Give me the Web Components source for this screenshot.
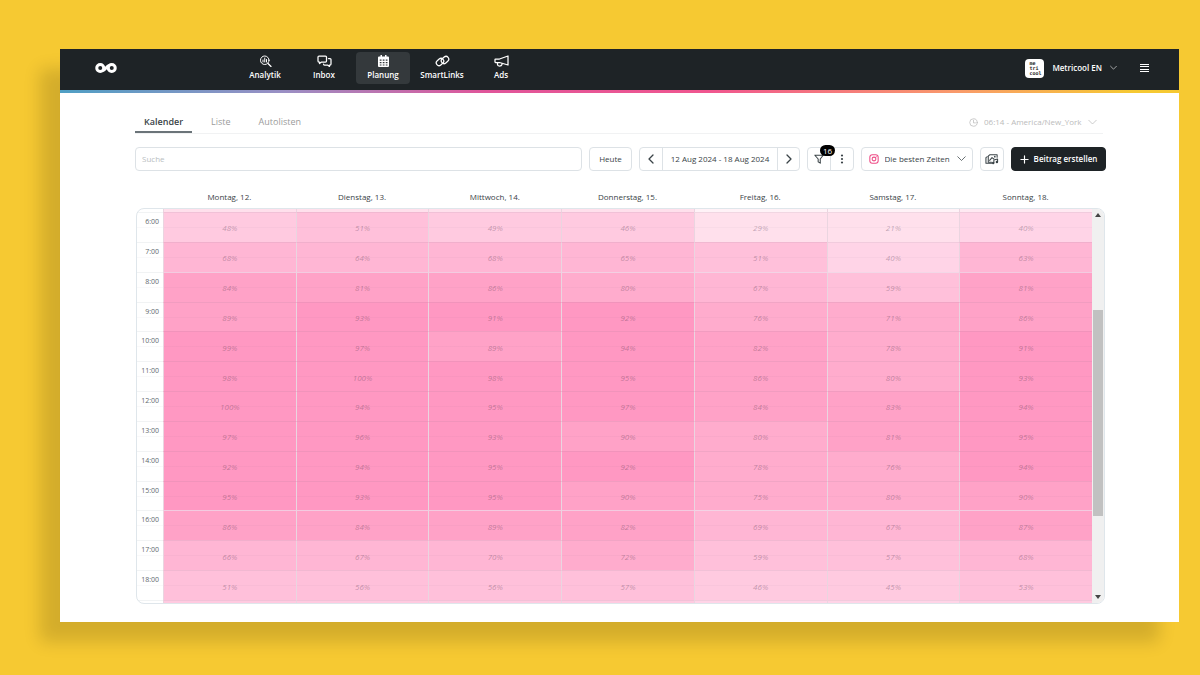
<!DOCTYPE html>
<html lang="de">
<head>
<meta charset="utf-8">
<title>Metricool – Planung</title>
<style>
  body { margin: 0; background: #f6c932; font-family: "Open Sans", "Noto Sans", sans-serif; font-size: 8px; line-height: 12px; color: #3a4347; }
</style>
</head>
<body>
<planner-window>
  <app-header slot="header">
    <nav-item icon="analytics">Analytik</nav-item>
    <nav-item icon="inbox">Inbox</nav-item>
    <nav-item icon="calendar" active>Planung</nav-item>
    <nav-item icon="links">SmartLinks</nav-item>
    <nav-item icon="ads">Ads</nav-item>
  </app-header>
  <view-tabs></view-tabs>
  <plan-toolbar></plan-toolbar>
  <week-calendar></week-calendar>
</planner-window>

<script>
const stroke = 'fill="none" stroke="currentColor" stroke-linecap="round" stroke-linejoin="round"';
const ICONS = {
  logo: ['0 0 44 22', `<g fill="none" stroke="currentColor" stroke-width="6"><circle cx="10.500" cy="11" r="7"/><circle cx="33.500" cy="11" r="7"/><path d="M16 16c4-1 8-9 12-10"/></g>`],
  analytics: ['0 0 24 24', `<g ${stroke} stroke-width="2"><circle cx="10.500" cy="10.500" r="8.500"/><path d="M17 17l6 6" stroke-width="2.500"/><path d="M7 10v4M10.500 6v8M14 9v5"/></g>`],
  inbox: ['0 0 30 24', `<g ${stroke} stroke-width="2.500"><path d="M4 2h13a2 2 0 0 1 2 2v8a2 2 0 0 1-2 2H9l-4 3v-3H4a2 2 0 0 1-2-2V4a2 2 0 0 1 2-2z"/><path d="M23 7h3a2 2 0 0 1 2 2v9a2 2 0 0 1-2 2h-1v3l-4-3h-6a2 2 0 0 1-2-2"/></g>`],
  calendar: ['0 0 22 24', `<path fill="currentColor" fill-rule="evenodd" d="M5 0h3v3h6V0h3v3h3a2 2 0 0 1 2 2v17a2 2 0 0 1-2 2H2a2 2 0 0 1-2-2V5a2 2 0 0 1 2-2h3zM3.500 9v2.500h3.500V9zm6 0v2.500H13V9zm6 0v2.500H19V9zm-12 5v2.500h3.500V14zm6 0v2.500H13V14zm6 0v2.500H19V14zm-12 5v2h3.500v-2zm6 0v2H13v-2zm6 0v2H19v-2z"/>`],
  links: ['0 0 30 24', `<g ${stroke} stroke-width="2.500"><rect x="-8" y="-5.500" width="16" height="11" rx="5.500" transform="translate(10 14) rotate(-40)"/><rect x="-8" y="-5.500" width="16" height="11" rx="5.500" transform="translate(20 10) rotate(-40)"/></g>`],
  ads: ['0 0 30 24', `<g ${stroke} stroke-width="2.500"><path d="M28 2v18L11 15H3a1 1 0 0 1-1-1V9a1 1 0 0 1 1-1h8z"/><path d="M7 15v4q0 3 4 3t5-3v-2"/></g>`],
  down: ['0 0 12 8', `<path ${stroke} d="M1 1l5 5 5-5"/>`],
  left: ['0 0 8 12', `<path ${stroke} stroke-width="1.300" d="M6 2L2 6l4 4"/>`],
  right: ['0 0 8 12', `<path ${stroke} stroke-width="1.300" d="M2 2l4 4-4 4"/>`],
  menu: ['0 0 9 8', `<path fill="currentColor" d="M0 0h9v1H0zM0 2h9v1H0zM0 5h9v1H0zM0 7h9v1H0z"/>`],
  clock: ['0 0 24 24', `<g ${stroke} stroke-width="2"><circle cx="12" cy="12" r="10"/><path d="M12 6v7h5"/></g>`],
  filter: ['0 0 24 24', `<path ${stroke} stroke-width="2.500" d="M2 3h20l-7 9v10l-5-3v-7z"/>`],
  dots: ['0 0 4 12', `<g fill="currentColor"><circle cx="2" cy="2.500" r="1.100"/><circle cx="2" cy="6" r="1.100"/><circle cx="2" cy="9.500" r="1.100"/></g>`],
  instagram: ['0 0 24 24', `<g ${stroke} stroke-width="2.500"><rect x="2" y="2" width="20" height="20" rx="6"/><circle cx="12" cy="12" r="4.500"/><path d="M17.500 6.500h.1"/></g>`],
  media: ['0 0 30 24', `<g ${stroke} stroke-width="2.200"><path d="M26 8V3H10l-3 3v13h7"/><path d="M5 7l-3 2v12h12"/><path d="M10 15l5-6 4 3"/><path d="M19 20v-6l8-2v6"/></g><g fill="currentColor"><circle cx="21" cy="7" r="1.800"/><circle cx="17.500" cy="20.500" r="2.600"/><circle cx="25.500" cy="18.500" r="2.600"/></g>`],
  plus: ['0 0 10 10', `<path ${stroke} stroke-width="1.300" d="M5 1v8M1 5h8"/>`],
  up: ['0 0 6 4', `<path fill="currentColor" d="M0 4l3-4 3 4z"/>`],
  caret: ['0 0 6 4', `<path fill="currentColor" d="M0 0l3 4 3-4z"/>`]
};

class UiIcon extends HTMLElement {
  connectedCallback() {
    if (this.shadowRoot) return;
    const [box, art] = ICONS[this.getAttribute('name')];
    this.attachShadow({ mode: 'open' }).innerHTML = `
      <style>:host{display:inline-flex;flex:none;width:12px;height:12px}svg{width:100%;height:100%}</style>
      <svg viewBox="${box}" aria-hidden="true">${art}</svg>`;
  }
}
customElements.define('ui-icon', UiIcon);

function define(name, markup, setup) {
  const template = document.createElement('template');
  template.innerHTML = `<style>*{box-sizing:border-box}button,input,select{font:inherit;color:inherit;margin:0}</style>` + markup;
  customElements.define(name, class extends HTMLElement {
    connectedCallback() {
      if (this.shadowRoot) return;
      const content = template.content.cloneNode(true);
      if (setup) setup(this, content);
      this.attachShadow({ mode: 'open' }).append(content);
    }
  });
}

define('planner-window', `
  <style>
    :host { display: block; margin: 49px 21px 53px 60px; background: #fff; box-shadow: -20px 20px 16px rgba(0,0,0,.14); }
    main { padding: 18px 73px 18px 75px; }
  </style>
  <slot name="header"></slot>
  <main><slot></slot></main>`);

define('app-header', `
  <style>
    :host { display: block; color: #fff; background: #1e2326; font-weight: 600; }
    header { display: flex; align-items: center; height: 41px; padding: 0 30px 3px 35px; }
    .logo { width: 143px; display: flex; color: #fff; }
    .logo ui-icon { width: 22px; height: 12px; }
    nav { display: flex; gap: 5px; flex: 1; }
    .account, .menu { display: flex; align-items: center; border: 0; padding: 0; background: none; }
    .account { gap: 8px; }
    .account ui-icon { width: 7px; height: 6px; }
    .avatar { display: flex; flex-direction: column; justify-content: center; width: 19px; height: 19px; border-radius: 4px; padding-left: 4px; background: #fff; color: #1e2326; text-align: left; font: 700 5px/5px "DejaVu Sans Mono", monospace; }
    .menu { margin-left: 23px; }
    .menu ui-icon { width: 9px; height: 8px; }
    .rainbow { height: 3px; background: linear-gradient(90deg, #4f9fc4 0%, #9a8fc4 20%, #e0559a 38%, #f0568f 58%, #f99a6b 80%, #f6c932 96%); }
  </style>
  <header>
    <a class="logo" href="#" aria-label="Metricool"><ui-icon name="logo"></ui-icon></a>
    <nav><slot></slot></nav>
    <button class="account"><span class="avatar"><span>me</span><span>tri</span><span>cool</span></span><span>Metricool EN</span><ui-icon name="down"></ui-icon></button>
    <button class="menu" aria-label="Menü"><ui-icon name="menu"></ui-icon></button>
  </header>
  <div class="rainbow"></div>`);

define('nav-item', `
  <style>
    :host { display: block; width: 54px; }
    a { display: flex; flex-direction: column; align-items: center; gap: 2px; height: 32px; padding-top: 3px; border-radius: 4px; color: #fff; text-decoration: none; white-space: nowrap; }
    :host([active]) a { background: #34393c; }
    ui-icon { width: 15px; height: 12px; }
  </style>
  <a href="#"><ui-icon></ui-icon><span><slot></slot></span></a>`,
  (host, root) => root.querySelector('ui-icon').setAttribute('name', host.getAttribute('icon')));

define('view-tabs', `
  <style>
    :host { display: flex; justify-content: space-between; height: 22px; margin-right: 3px; border-bottom: 1px solid #f1f2f3; }
    nav { display: flex; gap: 19px; font-size: 9px; }
    a { height: 22px; line-height: 22px; color: #9b9b9b; text-decoration: none; padding: 0 9px 0 0; }
    a[aria-current] { padding: 0 9px; color: #3a4347; font-weight: 600; border-bottom: 2px solid #6b7479; }
    label { display: flex; align-items: center; gap: 6px; padding-right: 6px; color: #bbb; }
    ui-icon { width: 9px; height: 9px; }
    select { appearance: none; border: 0; padding: 0; background: none; }
  </style>
  <nav><a href="#" aria-current="page">Kalender</a><a href="#">Liste</a><a href="#">Autolisten</a></nav>
  <label><ui-icon name="clock"></ui-icon><select aria-label="Zeitzone"><option>06:14 - America/New_York</option></select><ui-icon name="down"></ui-icon></label>`);

define('plan-toolbar', `
  <style>
    :host { display: flex; gap: 7px; height: 24px; margin-top: 13px; }
    input { flex: 1; min-width: 0; }
    input, .box { border: 1px solid #dde2e6; border-radius: 4px; background: #fff; padding: 0 6px; outline: 0; }
    input::placeholder { color: #b9bec1; }
    .box { display: flex; align-items: center; justify-content: center; flex: none; }
    .group { padding: 0; align-items: stretch; }
    .group > * { display: flex; align-items: center; justify-content: center; width: 22px; border: 0; padding: 0; background: none; }
    .group > * + * { border-left: 1px solid #dde2e6; }
    .group .range { width: 115px; }
    .today { width: 43px; }
    .filters { width: 47px; }
    .filters > * { flex: 1; }
    .filter { position: relative; }
    .badge { position: absolute; left: 12px; top: -3px; width: 15px; border-radius: 6px; color: #fff; background: #000; line-height: 11px; }
    .times { width: 112px; gap: 6px; }
    .times select { appearance: none; border: 0; padding: 0; background: none; }
    .arrow { width: 8px; height: 12px; }
    .instagram { color: #ee4c86; }
    .small { width: 9px; height: 10px; }
    .media { width: 24px; padding: 0; }
    .media ui-icon { width: 14px; }
    .create { width: 95px; gap: 5px; color: #fff; background: #1e2326; border-color: #1e2326; font-weight: 600; }
    .filter ui-icon, .instagram { width: 10px; height: 10px; }
    .create ui-icon { width: 9px; height: 9px; }
  </style>
  <input type="search" placeholder="Suche" aria-label="Suche">
  <button class="box today">Heute</button>
  <div class="box group"><button aria-label="Vorherige Woche"><ui-icon class="arrow" name="left"></ui-icon></button><span class="range">12 Aug 2024 - 18 Aug 2024</span><button aria-label="Nächste Woche"><ui-icon class="arrow" name="right"></ui-icon></button></div>
  <div class="box group filters"><button class="filter" aria-label="Filter"><ui-icon name="filter"></ui-icon><span class="badge">16</span></button><button aria-label="Mehr"><ui-icon name="dots"></ui-icon></button></div>
  <label class="box times"><ui-icon class="instagram" name="instagram"></ui-icon><select aria-label="Zeiten"><option>Die besten Zeiten</option></select><ui-icon class="small" name="down"></ui-icon></label>
  <button class="box media" aria-label="Medien"><ui-icon name="media"></ui-icon></button>
  <button class="box create"><ui-icon name="plus"></ui-icon>Beitrag erstellen</button>`);

const DAYS = ['Montag, 12.', 'Dienstag, 13.', 'Mittwoch, 14.', 'Donnerstag, 15.', 'Freitag, 16.', 'Samstag, 17.', 'Sonntag, 18.'];
const HOURS = {
  6: [48, 51, 49, 46, 29, 21, 40], 7: [68, 64, 68, 65, 51, 40, 63], 8: [84, 81, 86, 80, 67, 59, 81],
  9: [89, 93, 91, 92, 76, 71, 86], 10: [99, 97, 89, 94, 82, 78, 91], 11: [98, 100, 98, 95, 86, 80, 93],
  12: [100, 94, 95, 97, 84, 83, 94], 13: [97, 96, 93, 90, 80, 81, 95], 14: [92, 94, 95, 92, 78, 76, 94],
  15: [95, 93, 95, 90, 75, 80, 90], 16: [86, 84, 89, 82, 69, 67, 87], 17: [66, 67, 70, 72, 59, 57, 68],
  18: [51, 56, 56, 57, 46, 45, 53]
};
const SHADES = ['#fff', '#fff2f7', '#ffe9f2', '#ffe0ec', '#ffd4e7', '#ffcae0', '#ffc0da', '#ffb6d4', '#ffaccd', '#ffa2c7', '#ff98c2'];
const shade = value => SHADES[Math.ceil(value / 10)];
const edgeRow = values => `<tr class="edge" aria-hidden="true"><th></th>${values.map(v => `<td style="background-color:${shade(v)}"></td>`).join('')}</tr>`;

define('week-calendar', `
  <style>
    :host { display: block; margin-right: 1px; }
    .days { display: grid; grid-template-columns: 27px repeat(7, 1fr); padding: 18px 13px 3px 1px; line-height: 16px; text-align: center; }
    .days :first-child { grid-column: 2; }
    .frame { display: flex; margin-left: 1px; border: 1px solid #dfe6eb; border-radius: 8px; overflow: hidden; }
    table { flex: 1; display: grid; grid-template-rows: 3px repeat(13, 1fr) 3px; height: 394px; }
    tbody { display: contents; }
    tr { display: grid; grid-template-columns: 26px repeat(7, 1fr); min-height: 0; }
    th, td { padding: 0; border-top: 1px solid rgba(60,80,100,.07); background-image: linear-gradient(rgba(60,60,90,.03), rgba(60,60,90,.03)); background-size: 100% 1px; background-position: 0 14px; background-repeat: no-repeat; }
    th { padding: 3px 4px 0 0; text-align: right; font-weight: 400; font-size: 7px; color: #60696e; }
    td { display: flex; align-items: center; justify-content: center; border-left: 1px solid #ead5e0; font-style: italic; color: rgba(60,40,60,.34); padding-top: 2px; }
    tr.light td { border-top-color: rgba(235,230,240,.6); }
    tr.edge > * { padding: 0; background-image: none; }
    tr.edge:first-child > * { border-top: 0; }
    .bar { display: flex; flex-direction: column; align-items: center; justify-content: space-between; width: 12px; padding: 4px 0; background: #f0f0f0; color: #444; }
    .bar ui-icon { width: 6px; height: 4px; }
    .track { flex: 1; width: 10px; padding: 93px 0 0; }
    .thumb { height: 206px; background: #c1c1c1; }
  </style>
  <div class="days">${DAYS.map(d => `<span>${d}</span>`).join('')}</div>
  <div class="frame">
    <table aria-label="Beste Zeiten der Woche"><tbody>
      ${edgeRow([25, 25, 25, 25, 10, 10, 20])}
      ${Object.entries(HOURS).map(([h, vals]) => `<tr class="${h === '8' || h === '16' ? 'light' : ''}"><th scope="row">${h}:00</th>${vals.map(v => `<td style="background-color:${shade(v)}">${v}%</td>`).join('')}</tr>`).join('')}
      ${edgeRow([45, 45, 45, 45, 38, 38, 45])}
    </tbody></table>
    <div class="bar"><ui-icon name="up"></ui-icon><div class="track"><div class="thumb"></div></div><ui-icon name="caret"></ui-icon></div>
  </div>`);
</script>
</body>
</html>
